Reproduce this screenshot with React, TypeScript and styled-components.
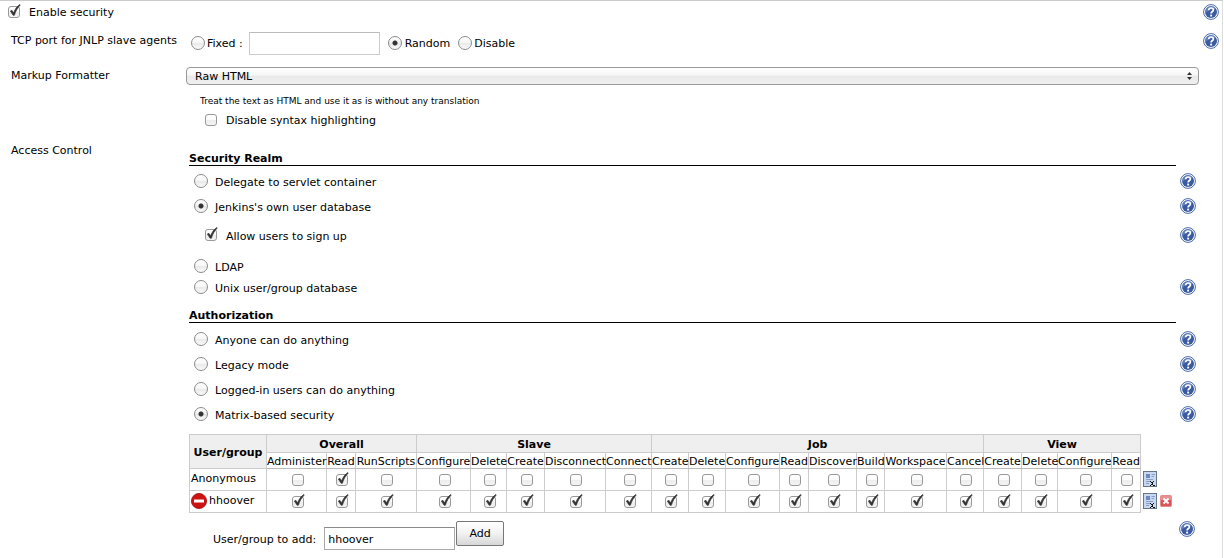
import React from "react";
import styled, { createGlobalStyle } from "styled-components";

const GlobalStyle = createGlobalStyle`
  *, *::before, *::after { box-sizing: border-box; }
  body {
    margin: 0;
    background: #fff;
    color: #000;
    font-family: Verdana, "DejaVu Sans", sans-serif;
    font-size: 11px;
    line-height: 16px;
  }
  input, select, button { font: inherit; color: inherit; margin: 0; }
`;

const Page = styled.form`
  border-top: 1px solid #ccc;
  border-right: 1px solid #ddd;
  margin-right: 1px;
  padding-bottom: 8px;
`;

const SettingRow = styled.div<{ $height?: number }>`
  display: grid;
  grid-template-columns: 175px minmax(0, 1fr) 23px;
  align-items: center;
  min-height: ${(p) => p.$height ?? 34}px;
  padding-left: 11px;
`;

const EnableRow = styled.div`
  display: flex;
  align-items: center;
  justify-content: space-between;
  height: 23px;
  padding: 0 3px 1px 8px;
`;

const Label = styled.label`
  white-space: nowrap;
`;

const Inline = styled.div<{ $indent?: number; $gap?: number }>`
  display: flex;
  align-items: center;
  gap: ${(p) => p.$gap ?? 0}px;
  padding-left: ${(p) => p.$indent ?? 0}px;
`;

const PortControls = styled(Inline)`
  padding-top: 4px;
`;

const PortChoice = styled(Inline)`
  margin-right: 8px;
`;

const RadioInput = styled.input`
  appearance: none;
  flex: none;
  display: block;
  width: 14px;
  height: 14px;
  border: 1px solid #8c8c8c;
  border-radius: 50%;
  background: linear-gradient(#fff, #f6f6f6 50%, #e9e9e9 51%, #fafafa);
  &:checked {
    background: radial-gradient(circle, #333 0, #333 2px, transparent 3px),
      linear-gradient(#fff, #f0f0f0 50%, #e6e6e6 51%, #fafafa);
  }
`;

const CheckWrap = styled.span`
  position: relative;
  display: inline-block;
  flex: none;
  width: 12px;
  height: 12px;
`;

const CheckInput = styled.input`
  appearance: none;
  display: block;
  width: 12px;
  height: 12px;
  border: 1px solid #999;
  border-radius: 3px;
  background: linear-gradient(#fff, #fafafa 50%, #ededed 51%, #f4f4f4);
  & + svg { display: none; }
  &:checked + svg { display: block; }
`;

const Tick = styled.svg`
  position: absolute;
  left: 0;
  top: -3px;
  pointer-events: none;
`;

const TextInput = styled.input<{ $dark?: boolean }>`
  width: 131px;
  height: 23px;
  padding: 2px 3px 0;
  border: 1px solid ${(p) => (p.$dark ? "#a9a9a9" : "#ccc")};
  border-top-color: ${(p) => (p.$dark ? "#8a8a8a" : "#bbb")};
  border-radius: 0;
  background: #fff;
  outline: none;
`;

const SelectWrap = styled.div`
  position: relative;
`;

const Select = styled.select`
  appearance: none;
  display: block;
  width: 100%;
  height: 18px;
  padding: 2px 8px 0;
  line-height: 14px;
  border: 1px solid #999;
  border-radius: 4px;
  background: linear-gradient(#fff, #f6f6f6 45%, #e9e9e9 50%, #f0f0f0);
`;

const SelectArrows = styled.svg`
  position: absolute;
  right: 7px;
  top: 5px;
  pointer-events: none;
`;

const Description = styled.p`
  margin: 0 0 0 200px;
  font-size: 9px;
  line-height: 14px;
`;

const SyntaxRow = styled(Inline)`
  height: 24px;
  margin-left: 205px;
`;

const AccessControl = styled.div`
  display: grid;
  grid-template-columns: 178px minmax(0, 1fr);
  padding: 0 26px 0 11px;
`;

const AccessLabel = styled.div`
  padding-top: 11px;
`;

const Heading = styled.h2<{ $top: number; $after: number }>`
  margin: 0 20px ${(p) => p.$after}px 0;
  padding-top: ${(p) => p.$top}px;
  border-bottom: 1px solid #000;
  font-size: 11px;
  line-height: 13px;
`;

const OptionRow = styled.div<{ $height?: number; $indent?: number }>`
  display: flex;
  align-items: center;
  justify-content: space-between;
  height: ${(p) => p.$height ?? 25}px;
  padding-left: ${(p) => p.$indent ?? 5}px;
`;

const LabelText = styled.span`
  padding-top: 2px;
`;

const OptionLabel = styled.label<{ $gap?: number }>`
  display: flex;
  align-items: center;
  gap: ${(p) => p.$gap ?? 7}px;
  white-space: nowrap;
  ${OptionRow} & ${LabelText} { padding-top: 4px; }
`;

const IconButton = styled.button`
  display: block;
  flex: none;
  padding: 0;
  border: 0;
  background: none;
  & > svg { display: block; }
`;

const Matrix = styled.table`
  table-layout: fixed;
  width: 990px;
  margin-top: 8px;
  border-collapse: collapse;
  th, td { padding: 0; }
`;

const GroupHead = styled.th`
  height: 18px;
  border: 1px solid #ccc;
  background: #efefef;
  && { padding-top: 2px; }
  line-height: 15px;
`;

const PermHead = styled.th`
  height: 16px;
  border: 1px solid #ccc;
  border-top-color: #bbb;
  border-bottom-color: #bbb;
  font-weight: normal;
  && { padding-top: 2px; }
  line-height: 13px;
  white-space: nowrap;
`;

const UserCell = styled.th`
  height: 22px;
  border: 1px solid #ccc;
  font-weight: normal;
  line-height: 16px;
  text-align: left;
`;

const UserName = styled(Inline)`
  padding: 0 0 2px 1px;
`;

const PermCell = styled.td`
  height: 22px;
  border: 1px solid #ccc;
  text-align: center;
  line-height: 0;
  & > span { margin: 1px 0 0 2px; }
`;

const ActionCell = styled.td`
  border: 0;
  && { padding-bottom: 2px; }
`;

const AddRow = styled.div`
  display: flex;
  align-items: flex-start;
  padding: 8px 1px 0 24px;
`;

const AddField = styled(Inline)`
  flex: 1;
  align-items: flex-start;
`;

const AddLabel = styled.label`
  display: flex;
  align-items: center;
  gap: 8px;
  padding-top: 6px;
`;

const AddButton = styled.button`
  width: 48px;
  height: 25px;
  margin-left: 1px;
  padding: 0;
  border: 1px solid #777;
  border-radius: 2px;
  background: linear-gradient(#fff, #f2f2f2 50%, #d6d6d6);
`;

function Help() {
  return (
    <IconButton type="button" aria-label="Help">
      <svg width="16" height="16" viewBox="0 0 16 16">
        <circle cx="8" cy="8" r="7.4" fill="#fff" stroke="#4a68a8" strokeWidth="1" />
        <circle cx="8" cy="8" r="6" fill="#3a5ba0" />
        <path d="M2.200 9.500C4 6.500 8 4.500 13 5A6 6 0 0 0 2.200 9.500Z" fill="#7f9bcd" opacity=".6" />
        <path d="M5.700 6.300C5.700 4.700 6.800 4 8 4c1.500 0 2.400.8 2.400 1.900C10.400 7.500 8.100 7.600 8.100 9.600" fill="none" stroke="#fff" strokeWidth="1.700" />
        <rect x="7.200" y="10.600" width="1.900" height="1.900" fill="#fff" />
      </svg>
    </IconButton>
  );
}

function Check({ label, checked }: { label?: string; checked?: boolean }) {
  return (
    <CheckWrap>
      <CheckInput type="checkbox" aria-label={label} defaultChecked={checked} />
      <Tick width="14" height="15" viewBox="0 0 14 15" aria-hidden="true">
        <path d="M2.300 8 3.900 7.300 5.600 9.800C7 6 9 3.200 11.800 1.500L12.300 2C9.700 4.700 7.700 8 6.400 12.300L5.100 12.300Z" fill="#333" stroke="#333" strokeWidth=".6" />
      </Tick>
    </CheckWrap>
  );
}

function Option({ name, text, checked, height, help = true }: {
  name: string; text: string; checked?: boolean; height?: number; help?: boolean;
}) {
  return (
    <OptionRow $height={height}>
      <OptionLabel>
        <RadioInput type="radio" name={name} defaultChecked={checked} />
        <LabelText>{text}</LabelText>
      </OptionLabel>
      {help && <Help />}
    </OptionRow>
  );
}

const groups = [
  { name: "Overall", perms: ["Administer", "Read", "RunScripts"] },
  { name: "Slave", perms: ["Configure", "Delete", "Create", "Disconnect", "Connect"] },
  { name: "Job", perms: ["Create", "Delete", "Configure", "Read", "Discover", "Build", "Workspace", "Cancel"] },
  { name: "View", perms: ["Create", "Delete", "Configure", "Read"] },
];
const columns = groups.flatMap((g) => g.perms.map((p) => ({ group: g.name, perm: p })));
const widths = [77, 60, 29, 61, 54, 36, 38, 61, 46, 37, 37, 54, 29, 48, 28, 62, 37, 38, 36, 54, 29, 39];

const users = [
  { name: "Anonymous", known: true, has: (i: number) => i === 1 },
  { name: "hhoover", known: false, has: () => true },
];

function UnknownUserIcon() {
  return (
    <svg width="16" height="16" viewBox="0 0 16 16" aria-hidden="true">
      <circle cx="8" cy="8" r="7.600" fill="#cc1212" stroke="#a30d0d" strokeWidth=".8" />
      <rect x="3" y="6.500" width="10" height="3" fill="#fff" />
    </svg>
  );
}

function ToggleIcon() {
  return (
    <svg width="14" height="16" viewBox="0 0 14 16">
      <rect x=".5" y=".5" width="13" height="15" fill="#c9d8ee" stroke="#66758c" />
      <rect x="3" y="3" width="4" height="4" fill="#6b8abf" />
      <path d="M8.500 3.500h3.500M8.500 5.500h2.500M3 8.500h7M3 10.500h4M3 12.500h3" stroke="#86a0cb" />
      <path d="M7 10.500h1M10 10.500h1M8.500 11v1M9.500 11v3M7 14.500h1M8.500 13v1M10 14.500h2" fill="none" stroke="#111" />
    </svg>
  );
}

function RemoveIcon() {
  return (
    <svg width="12" height="12" viewBox="0 0 12 12">
      <rect x=".5" y=".5" width="11" height="11" rx="1" fill="#d9555a" stroke="#e58a8c" />
      <rect x="1" y="1" width="10" height="4" fill="#e88f91" />
      <path d="M3.500 3.500l5 5M8.500 3.500l-5 5" stroke="#fff" strokeWidth="1.800" />
    </svg>
  );
}

export default function App() {
  return (
    <>
      <GlobalStyle />
      <Page onSubmit={(e) => e.preventDefault()}>
        <EnableRow>
          <OptionLabel $gap={9}>
            <Check checked />
            <LabelText>Enable security</LabelText>
          </OptionLabel>
          <Help />
        </EnableRow>

        <SettingRow>
          <Label htmlFor="port">TCP port for JNLP slave agents</Label>
          <PortControls $indent={5}>
            <OptionLabel $gap={2}>
              <RadioInput type="radio" name="portType" />
              <LabelText>Fixed :</LabelText>
            </OptionLabel>
            <PortChoice $indent={6}><TextInput id="port" type="text" /></PortChoice>
            <PortChoice>
              <OptionLabel $gap={3}>
                <RadioInput type="radio" name="portType" defaultChecked />
                <LabelText>Random</LabelText>
              </OptionLabel>
            </PortChoice>
            <OptionLabel $gap={2}>
              <RadioInput type="radio" name="portType" />
              <LabelText>Disable</LabelText>
            </OptionLabel>
          </PortControls>
          <Inline $indent={4}><Help /></Inline>
        </SettingRow>

        <SettingRow $height={36}>
          <Label htmlFor="formatter">Markup Formatter</Label>
          <SelectWrap>
            <Select id="formatter"><option>Raw HTML</option></Select>
            <SelectArrows width="5" height="8" viewBox="0 0 5 8" aria-hidden="true">
              <path d="M2.500 0 5 3H0ZM2.500 8 0 5H5Z" fill="#333" />
            </SelectArrows>
          </SelectWrap>
        </SettingRow>
        <Description>Treat the text as HTML and use it as is without any translation</Description>
        <SyntaxRow>
          <OptionLabel $gap={9}>
            <Check />
            <LabelText>Disable syntax highlighting</LabelText>
          </OptionLabel>
        </SyntaxRow>

        <AccessControl>
          <AccessLabel>Access Control</AccessLabel>
          <div>
            <Heading $top={20} $after={2}>Security Realm</Heading>
            <Option name="realm" text="Delegate to servlet container" />
            <Option name="realm" text="Jenkins's own user database" checked />
            <OptionRow $height={33} $indent={16}>
              <OptionLabel $gap={9}>
                <Check checked />
                <LabelText>Allow users to sign up</LabelText>
              </OptionLabel>
              <Help />
            </OptionRow>
            <Option name="realm" text="LDAP" height={29} help={false} />
            <Option name="realm" text="Unix user/group database" height={14} />

            <Heading $top={15} $after={3}>Authorization</Heading>
            <Option name="auth" text="Anyone can do anything" />
            <Option name="auth" text="Legacy mode" />
            <Option name="auth" text="Logged-in users can do anything" />
            <Option name="auth" text="Matrix-based security" checked />

            <Matrix>
              <colgroup>
                {widths.map((w, i) => <col key={i} width={w} />)}
              </colgroup>
              <thead>
                <tr>
                  <GroupHead rowSpan={2}>User/group</GroupHead>
                  {groups.map((g) => (
                    <GroupHead key={g.name} colSpan={g.perms.length}>{g.name}</GroupHead>
                  ))}
                </tr>
                <tr>
                  {columns.map((c) => <PermHead key={c.group + c.perm}>{c.perm}</PermHead>)}
                </tr>
              </thead>
              <tbody>
                {users.map((u) => (
                  <tr key={u.name}>
                    <UserCell scope="row">
                      <UserName $gap={2}>{!u.known && <UnknownUserIcon />}{u.name}</UserName>
                    </UserCell>
                    {columns.map((c, i) => (
                      <PermCell key={c.group + c.perm}>
                        <Check label={`${u.name}: ${c.group} ${c.perm}`} checked={u.has(i)} />
                      </PermCell>
                    ))}
                    <ActionCell>
                      <Inline $indent={2} $gap={3}>
                        <IconButton type="button" aria-label="Toggle all"><ToggleIcon /></IconButton>
                        {!u.known && <IconButton type="button" aria-label="Remove user"><RemoveIcon /></IconButton>}
                      </Inline>
                    </ActionCell>
                  </tr>
                ))}
              </tbody>
            </Matrix>

            <AddRow>
              <AddField>
                <AddLabel>
                  <LabelText>User/group to add:</LabelText>
                  <TextInput $dark type="text" defaultValue="hhoover" />
                </AddLabel>
                <AddButton type="button">Add</AddButton>
              </AddField>
              <Help />
            </AddRow>
          </div>
        </AccessControl>
      </Page>
    </>
  );
}
